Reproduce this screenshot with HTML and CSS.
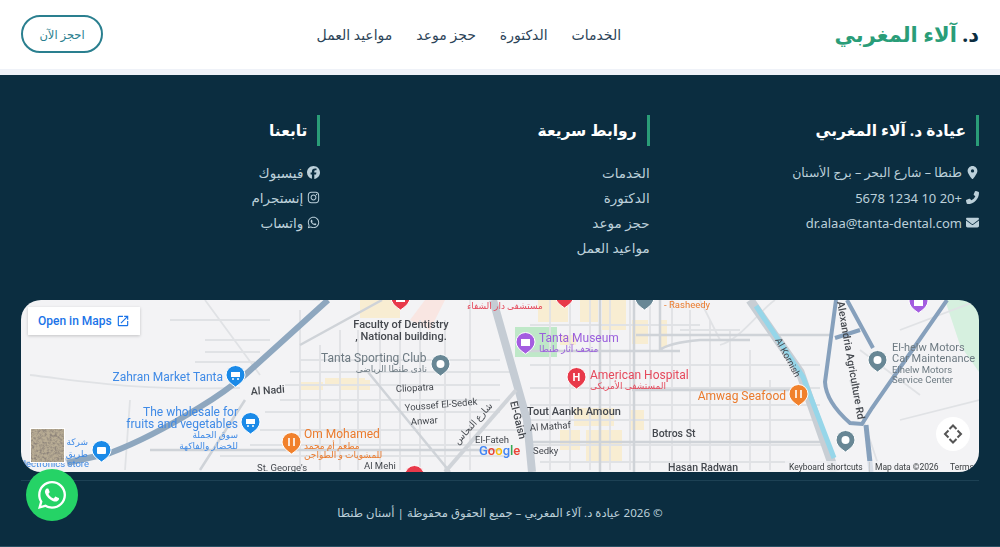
FILE: index.html
```html
<!DOCTYPE html>
<html lang="ar" dir="rtl">
<head>
    <meta charset="utf-8">
    <title>د. آلاء المغربي</title>
    <link rel="stylesheet" href="styles.css">
</head>
<body>
<header class="topbar">
    <a class="logo"><span class="logo-dr">د.</span> آلاء المغربي</a>
    <nav class="nav">
        <a>الخدمات</a>
        <a>الدكتورة</a>
        <a>حجز موعد</a>
        <a>مواعيد العمل</a>
    </nav>
    <a class="book-btn">احجز الآن</a>
</header>

<footer class="footer">
    <div class="cols">
        <div class="col">
            <h3 class="col-title">عيادة د. آلاء المغربي</h3>
            <ul class="list">
                <li class="list-sm"><svg class="ico" viewBox="0 0 384 512"><path d="M215.7 499.2C267 435 384 279.4 384 192C384 86 298 0 192 0S0 86 0 192c0 87.4 117 243 168.3 307.2c12.3 15.3 35.1 15.3 47.4 0zM192 128a64 64 0 1 1 0 128 64 64 0 1 1 0-128z"/></svg>طنطا – شارع البحر – برج الأسنان</li>
                <li class="list-sm"><svg class="ico ico-flip" viewBox="0 0 512 512"><path d="M164.9 24.6c-7.7-18.6-28-28.5-47.4-23.2l-88 24C12.1 30.2 0 46 0 64C0 311.4 200.6 512 448 512c18 0 33.8-12.1 38.6-29.5l24-88c5.3-19.4-4.6-39.7-23.2-47.4l-96-40c-16.3-6.8-35.2-2.1-46.3 11.6L304.7 368C234.3 334.7 177.3 277.7 144 207.3L193.3 167c13.7-11.2 18.4-30 11.6-46.3l-40-96z"/></svg><span class="latin">+20 10 1234 5678</span></li>
                <li class="list-sm"><svg class="ico" viewBox="0 0 512 512"><path d="M48 64C21.5 64 0 85.5 0 112c0 15.1 7.1 29.3 19.2 38.4L236.8 313.6c11.4 8.5 27 8.5 38.4 0L492.8 150.4c12.1-9.1 19.2-23.3 19.2-38.4c0-26.5-21.5-48-48-48H48zM0 176V384c0 35.3 28.7 64 64 64H448c35.3 0 64-28.7 64-64V176L294.4 339.2c-22.8 17.1-54 17.1-76.8 0L0 176z"/></svg><span class="latin" dir="ltr">dr.alaa@tanta-dental.com</span></li>
            </ul>
        </div>
        <div class="col">
            <h3 class="col-title">روابط سريعة</h3>
            <ul class="list">
                <li>الخدمات</li>
                <li>الدكتورة</li>
                <li>حجز موعد</li>
                <li>مواعيد العمل</li>
            </ul>
        </div>
        <div class="col">
            <h3 class="col-title">تابعنا</h3>
            <ul class="list">
                <li><svg class="ico" viewBox="0 0 512 512"><path d="M512 256C512 114.6 397.4 0 256 0S0 114.6 0 256C0 376 82.7 476.8 194.2 504.5V334.2H141.4V256h52.8V222.3c0-87.1 39.4-127.5 125-127.5c16.2 0 44.2 3.2 55.7 6.4V172c-6-.6-16.5-1-29.6-1c-42 0-58.2 15.9-58.2 57.2V256h83.6l-14.4 78.2H287V510.1C413.8 494.8 512 386.9 512 256h0z"/></svg>فيسبوك</li>
                <li><svg class="ico" viewBox="0 0 448 512"><path d="M224.1 141c-63.6 0-114.9 51.3-114.9 114.9s51.3 114.9 114.9 114.9S339 319.5 339 255.9 287.7 141 224.1 141zm0 189.6c-41.1 0-74.7-33.5-74.7-74.7s33.5-74.7 74.7-74.7 74.7 33.5 74.7 74.7-33.6 74.7-74.7 74.7zm146.4-194.3c0 14.9-12 26.8-26.8 26.8-14.9 0-26.8-12-26.8-26.8s12-26.8 26.8-26.8 26.8 12 26.8 26.8zm76.1 27.2c-1.7-35.9-9.9-67.7-36.2-93.9-26.2-26.2-58-34.4-93.9-36.2-37-2.1-147.9-2.1-184.9 0-35.8 1.7-67.6 9.9-93.9 36.1s-34.4 58-36.2 93.9c-2.1 37-2.1 147.9 0 184.9 1.7 35.9 9.9 67.7 36.2 93.9s58 34.4 93.9 36.2c37 2.1 147.9 2.1 184.9 0 35.9-1.7 67.7-9.9 93.9-36.2 26.2-26.2 34.4-58 36.2-93.9 2.1-37 2.1-147.8 0-184.8zM398.8 388c-7.8 19.6-22.9 34.7-42.6 42.6-29.5 11.7-99.5 9-132.1 9s-102.7 2.6-132.1-9c-19.6-7.8-34.7-22.9-42.6-42.6-11.7-29.5-9-99.5-9-132.1s-2.6-102.7 9-132.1c7.8-19.6 22.9-34.7 42.6-42.6 29.5-11.7 99.5-9 132.1-9s102.7-2.6 132.1 9c19.6 7.8 34.7 22.9 42.6 42.6 11.7 29.5 9 99.5 9 132.1s2.7 102.7-9 132.1z"/></svg>إنستجرام</li>
                <li><svg class="ico" viewBox="0 0 448 512"><path d="M380.9 97.1C339 55.1 283.2 32 223.9 32c-122.4 0-222 99.6-222 222 0 39.1 10.2 77.3 29.6 111L0 480l117.7-30.9c32.4 17.7 68.9 27 106.1 27h.1c122.3 0 224.1-99.6 224.1-222 0-59.3-25.2-115-67.1-157zm-157 341.6c-33.2 0-65.7-8.9-94-25.7l-6.7-4-69.8 18.3L72 359.2l-4.4-7c-18.5-29.4-28.2-63.3-28.2-98.2 0-101.7 82.8-184.5 184.6-184.5 49.3 0 95.6 19.2 130.4 54.1 34.8 34.9 56.2 81.2 56.1 130.5 0 101.8-84.9 184.6-186.6 184.6zm101.2-138.2c-5.5-2.8-32.8-16.2-37.9-18-5.1-1.9-8.8-2.8-12.5 2.8-3.7 5.6-14.3 18-17.6 21.8-3.2 3.7-6.5 4.2-12 1.4-32.6-16.3-54-29.1-75.5-66-5.7-9.8 5.7-9.1 16.3-30.3 1.8-3.7.9-6.9-.5-9.7-1.4-2.8-12.5-30.1-17.1-41.2-4.5-10.8-9.1-9.3-12.5-9.5-3.2-.2-6.9-.2-10.6-.2-3.7 0-9.7 1.4-14.8 6.9-5.1 5.6-19.4 19-19.4 46.3 0 27.3 19.9 53.7 22.6 57.4 2.8 3.7 39.1 59.7 94.8 83.8 35.2 15.2 49 16.5 66.6 13.9 10.7-1.6 32.8-13.4 37.4-26.4 4.6-13 4.6-24.1 3.2-26.4-1.3-2.5-5-3.9-10.5-6.6z"/></svg>واتساب</li>
            </ul>
        </div>
    </div>

    <div class="map">
        <svg class="map-art" viewBox="21 300 958 172">
            <defs>
                <filter id="rock" x="0" y="0" width="100%" height="100%"><feTurbulence type="fractalNoise" baseFrequency="0.4" numOctaves="3"/><feColorMatrix values="0 0 0 0 0.28  0 0 0 0 0.24  0 0 0 0 0.2  2 2 0 0 -1.7"/></filter>
            </defs>
            <rect x="21" y="300" width="958" height="172" fill="#f3f3f5"/>
            <polygon points="945,300 979,300 979,372 960,345" fill="#d6f0df"/>
            <rect x="515" y="327" width="42" height="30" fill="#bfe8c8"/>
            <polygon points="425,300 445,300 430,330 410,320" fill="#f9e6e2"/>
            <!-- beige blocks -->
            <g fill="#f8edd2">
                <rect x="580" y="300" width="18" height="22"/><rect x="602" y="300" width="24" height="30"/><rect x="632" y="320" width="16" height="24"/>
                <rect x="560" y="335" width="16" height="10"/><rect x="574" y="408" width="40" height="18"/><rect x="560" y="430" width="20" height="20"/>
                <rect x="586" y="430" width="36" height="32"/><rect x="630" y="410" width="14" height="20"/><rect x="325" y="378" width="40" height="8"/>
                <rect x="301" y="382" width="22" height="8"/><rect x="360" y="300" width="40" height="18"/><rect x="340" y="380" width="30" height="10"/>
                <rect x="660" y="320" width="7" height="28"/><rect x="538" y="300" width="30" height="22"/>
            </g>
            <!-- street grid -->
            <g fill="none" stroke="#e0e2e5" stroke-width="1.8">
                <path d="M300 360H500M290 372H510M285 385H500M280 400H500M265 412H500M260 430H520M250 445H500M220 456H510"/>
                <path d="M530 325H700M530 365H820M530 388H820M530 405H820M530 420H820M530 445H830M540 462H830"/>
                <path d="M300 310V470M320 345V470M340 330V470M358 330V470M380 320V470M400 320V470M420 320V470M445 320V470M470 300V470"/>
                <path d="M550 300V470M570 300V470M590 300V470M610 300V470M630 300V470M650 300V470M672 300V470M690 310V470M710 320V470M730 330V470M750 350V470M770 380V470"/>
                <path d="M205 300L260 375M230 300H320M170 320H270M205 340H270M205 352H260M195 362H255"/>
                <path d="M30 375C90 382 130 390 240 388M130 400L125 470M740 330H680M720 345C740 340 760 310 775 300M700 300L720 340"/>
                <path d="M860 350L920 395M850 380L880 470M900 420L979 400M900 330L979 300"/>
            </g>
            <g fill="none" stroke="#cfd3d8" stroke-width="2.500">
                <path d="M382 300L300 345M368 372L450 472M245 400L200 470M150 450H500M600 300V472M634 300V472M660 300V350Q668 343 700 340L750 340M530 442H830M520 351H680M20 463C60 462 90 456 120 450"/>
                <path d="M636 335H830M632 390H800"/>
            </g>
            <path d="M493 300L510 360L527 420L532 472" fill="none" stroke="#c5ccd4" stroke-width="8"/>
            <path d="M516 390L445 472" fill="none" stroke="#d0d4d9" stroke-width="4"/>
            <path d="M328 300L245 375Q225 392 200 407Q150 438 110 453L67 463" fill="none" stroke="#8ea7bf" stroke-width="6"/>
            <path d="M750 300L800 372L835 472" fill="none" stroke="#c8ced4" stroke-width="9"/>
            <path d="M756 306L803 377L834 458" fill="none" stroke="#96d6e9" stroke-width="5"/>
            <g fill="none" stroke="#86a0bc" stroke-width="4">
                <path d="M836 300L825 382Q826 402 850 423L862 424L872 408L947 300"/>
                <path d="M847 300L873 348M835 338L860 330"/>
                <path d="M866 425L871 472" stroke-width="5"/>
            </g>
            <!-- labels -->
            <g class="m-dark">
                <text x="401" y="328" text-anchor="middle" class="m-bold">Faculty of Dentistry</text>
                <text x="401" y="340" text-anchor="middle" class="m-bold">, National building.</text>
                <text x="251" y="395" class="m-sm" transform="rotate(-4 251 395)">Al Nadi</text>
                <text x="396" y="392" class="m-xs" transform="rotate(-3 396 392)">Cliopatra</text>
                <text x="405" y="411" class="m-xs" transform="rotate(-5 405 411)">Youssef El-Sedek</text>
                <text x="411" y="425" class="m-xs" transform="rotate(-4 411 425)">Anwar</text>
                <text x="527" y="415" class="m-bold">Tout Aankh Amoun</text>
                <text x="530" y="431" class="m-xs" transform="rotate(-4 530 431)">Al Mathaf</text>
                <text x="475" y="443" class="m-xs">El-Fateh</text>
                <text x="533" y="454" class="m-xs">Sedky</text>
                <text x="0" y="0" class="m-sm" transform="translate(510 402) rotate(76)">El-Gaish</text>
                <text x="0" y="0" class="m-xs" transform="translate(458 445) rotate(-48)">شارع النحاس</text>
                <text x="364" y="469" class="m-xs">Al Mehi</text>
                <text x="652" y="437" class="m-sm">Botros St</text>
                <text x="668" y="471" class="m-sm">Hasan Radwan</text>
                <text x="257" y="471" class="m-xs">St. George's</text>
                <text x="0" y="0" class="m-xs" transform="translate(775 340) rotate(62)">Al Kornish</text>
                <text x="0" y="0" class="m-sm" transform="translate(837 302) rotate(80)">Alexandria Agriculture Rd</text>
            </g>
            <g class="m-gray">
                <text x="321" y="362" class="m-lg">Tanta Sporting Club</text>
                <text x="427" y="372" class="m-ar" text-anchor="end">نادى طنطا الرياضى</text>
                <text x="892" y="351" class="m-md">El-helw Motors</text>
                <text x="892" y="362" class="m-md">Car Maintenance</text>
                <text x="892" y="373" class="m-xs">Elhelw Motors</text>
                <text x="892" y="383" class="m-xs">Service Center</text>
            </g>
            <g class="m-blue">
                <text x="223" y="381" text-anchor="end" class="m-lg">Zahran Market Tanta</text>
                <text x="238" y="416" text-anchor="end" class="m-lg">The wholesale for</text>
                <text x="238" y="428" text-anchor="end" class="m-lg">fruits and vegetables</text>
                <text x="238" y="438" text-anchor="end" class="m-ar">سوق الجملة</text>
                <text x="238" y="449" text-anchor="end" class="m-ar">للخضار والفاكهة</text>
                <text x="88" y="445" text-anchor="end" class="m-ar">شركة</text>
                <text x="88" y="457" text-anchor="end" class="m-ar">طريق</text>
                <text x="89" y="467" text-anchor="end" class="m-xs">Electronics store</text>
            </g>
            <g class="m-orange">
                <text x="304" y="438" class="m-lg">Om Mohamed</text>
                <text x="304" y="449" class="m-ar">مطعم أم محمد</text>
                <text x="304" y="458" class="m-ar">للمشويات و الطواجن</text>
                <text x="786" y="400" text-anchor="end" class="m-lg">Amwag Seafood</text>
            </g>
            <g class="m-red">
                <text x="590" y="379" class="m-lg">American Hospital</text>
                <text x="590" y="389" class="m-ar">المستشفى الأمريكى</text>
                <text x="467" y="309" class="m-ar">مستشفى دار الشفاء</text>
            </g>
            <text x="664" y="308" class="m-xs m-orange">- Rasheedy</text>
            <g class="m-purple">
                <text x="539" y="342" class="m-lg">Tanta Museum</text>
                <text x="539" y="352" class="m-ar">متحف آثار طنطا</text>
            </g>
            <!-- pins -->
            <g>
                <g fill="#1a8ae8" stroke="#fff"><path d="M226 375a9.500 9.500 0 1 1 19 0q0 6-9.500 12q-9.500-6-9.500-12z"/><path d="M241 422a9.500 9.500 0 1 1 19 0q0 6-9.500 12q-9.500-6-9.500-12z"/><path d="M92 450a9.500 9.500 0 1 1 19 0q0 6-9.500 12q-9.500-6-9.500-12z"/></g>
                <g fill="#fff"><rect x="231" y="372" width="9" height="5"/><rect x="246" y="419" width="9" height="5"/><rect x="97" y="447" width="9" height="7" rx="1"/><circle cx="233" cy="379" r="1"/><circle cx="238" cy="379" r="1"/><circle cx="248" cy="426" r="1"/><circle cx="253" cy="426" r="1"/></g>
                <g fill="#f1812c" stroke="#fff"><path d="M282 442a9.500 9.500 0 1 1 19 0q0 6-9.500 12q-9.500-6-9.500-12z"/><path d="M789 394a9.500 9.500 0 1 1 19 0q0 6-9.500 12q-9.500-6-9.500-12z"/></g>
                <g stroke="#fff" stroke-width="1.600" fill="none"><path d="M289 438v8M294 438v8M796 390v8M801 390v8"/></g>
                <g fill="#e8394a" stroke="#fff"><path d="M567 377a9.500 9.500 0 1 1 19 0q0 6-9.500 12q-9.500-6-9.500-12z"/><path d="M391 298a9.500 9.500 0 1 1 19 0q0 6-9.500 12q-9.500-6-9.500-12z"/><path d="M555 296a9.500 9.500 0 1 1 19 0q0 6-9.500 12q-9.500-6-9.500-12z"/><path d="M405 475a9.500 9.500 0 1 1 19 0q0 6-9.500 12q-9.500-6-9.500-12z"/></g>
                <text x="576.5" y="381" text-anchor="middle" class="m-pin">H</text>
                <g fill="#fff"><rect x="396" y="296" width="9" height="6"/><rect x="560" y="294" width="9" height="6"/></g>
                <g fill="#a45de0" stroke="#fff"><path d="M516 342a9.500 9.500 0 1 1 19 0q0 6-9.500 12q-9.500-6-9.500-12z"/><path d="M909 301a9.500 9.500 0 1 1 19 0q0 6-9.500 12q-9.500-6-9.500-12z"/></g>
                <g fill="#fff"><rect x="521" y="339" width="9" height="7"/><rect x="914" y="299" width="9" height="7"/></g>
                <g fill="#688795" stroke="#fff"><path d="M431 364a9.500 9.500 0 1 1 19 0q0 6-9.500 12q-9.500-6-9.500-12z"/><path d="M868 360a9.500 9.500 0 1 1 19 0q0 6-9.500 12q-9.500-6-9.500-12z"/><path d="M836 440a9.500 9.500 0 1 1 19 0q0 6-9.500 12q-9.500-6-9.500-12z"/><path d="M635 298a9.500 9.500 0 1 1 19 0q0 6-9.500 12q-9.500-6-9.500-12z"/></g>
                <g fill="#fff"><circle cx="440.500" cy="364" r="4"/><circle cx="877.500" cy="360" r="4"/><circle cx="845.500" cy="440" r="4"/></g>
            </g>
            <text x="479" y="455" class="m-goog"><tspan fill="#4285f4">G</tspan><tspan fill="#ea4335">o</tspan><tspan fill="#fbbc05">o</tspan><tspan fill="#4285f4">g</tspan><tspan fill="#34a853">l</tspan><tspan fill="#ea4335">e</tspan></text>
            <rect x="30" y="428" width="35" height="35" fill="#fff"/>
            <rect x="31" y="429" width="33" height="33" fill="#b8ac94"/>
            <rect x="31" y="429" width="33" height="33" filter="url(#rock)"/>
            <rect x="785" y="461" width="194" height="11" fill="#f3f3f5" opacity="0.75"/>
            <text x="789" y="470" class="m-attr">Keyboard shortcuts</text>
            <rect x="869" y="462" width="1" height="10" fill="#c9cbce"/>
            <text x="875" y="470" class="m-attr">Map data ©2026</text>
            <text x="950" y="470" class="m-attr">Terms</text>
            <circle cx="953" cy="434" r="17" fill="#fff"/>
            <path d="M949.500 429l3.500-3.500 3.500 3.500M949.500 439l3.500 3.500 3.500-3.500M948.500 430.500l-3.500 3.500 3.500 3.500M957.500 430.500l3.500 3.500-3.500 3.500" fill="none" stroke="#555" stroke-width="2"/>
        </svg>
        <a class="open-maps" dir="ltr">Open in Maps
            <svg class="open-ico" viewBox="0 0 24 24"><path d="M19 19H5V5h7V3H5a2 2 0 0 0-2 2v14a2 2 0 0 0 2 2h14a2 2 0 0 0 2-2v-7h-2v7zM14 3v2h3.590l-9.830 9.830 1.410 1.410L19 6.410V10h2V3h-7z"/></svg>
        </a>
    </div>

    <div class="copy">© 2026 عيادة د. آلاء المغربي – جميع الحقوق محفوظة | أسنان طنطا</div>
</footer>

<a class="wa-float"><svg viewBox="0 0 448 512"><path d="M380.9 97.1C339 55.1 283.2 32 223.9 32c-122.4 0-222 99.6-222 222 0 39.1 10.2 77.3 29.6 111L0 480l117.7-30.9c32.4 17.7 68.9 27 106.1 27h.1c122.3 0 224.1-99.6 224.1-222 0-59.3-25.2-115-67.1-157zm-157 341.6c-33.2 0-65.7-8.9-94-25.7l-6.7-4-69.8 18.3L72 359.2l-4.4-7c-18.5-29.4-28.2-63.3-28.2-98.2 0-101.7 82.8-184.5 184.6-184.5 49.3 0 95.6 19.2 130.4 54.1 34.8 34.9 56.2 81.2 56.1 130.5 0 101.8-84.9 184.6-186.6 184.6zm101.2-138.2c-5.5-2.8-32.8-16.2-37.9-18-5.1-1.9-8.8-2.8-12.5 2.8-3.7 5.6-14.3 18-17.6 21.8-3.2 3.7-6.5 4.2-12 1.4-32.6-16.3-54-29.1-75.5-66-5.7-9.8 5.7-9.1 16.3-30.3 1.8-3.7.9-6.9-.5-9.7-1.4-2.8-12.5-30.1-17.1-41.2-4.5-10.8-9.1-9.3-12.5-9.5-3.2-.2-6.9-.2-10.6-.2-3.7 0-9.7 1.4-14.8 6.9-5.1 5.6-19.4 19-19.4 46.3 0 27.3 19.9 53.7 22.6 57.4 2.8 3.7 39.1 59.7 94.8 83.8 35.2 15.2 49 16.5 66.6 13.9 10.7-1.6 32.8-13.4 37.4-26.4 4.6-13 4.6-24.1 3.2-26.4-1.3-2.5-5-3.9-10.5-6.6z"/></svg></a>
</body>
</html>
```
FILE: styles.css
```css
* {
    box-sizing: border-box;
}
body {
    margin: 0;
    background: #eff2f8;
    font-family: "Noto Sans", "DejaVu Sans", sans-serif;
    overflow: hidden;
}

/* top bar */
.topbar {
    height: 69px;
    background: #fff;
    padding: 0 21px 1px;
    display: flex;
    align-items: center;
    justify-content: space-between;
}
.logo {
    font-size: 21px;
    font-weight: 700;
    color: #2a9d78;
}
.logo-dr {
    color: #0b2d40;
}
.nav {
    display: flex;
    gap: 24px;
    font-size: 14px;
    color: #2c4458;
}
.book-btn {
    width: 82px;
    height: 38px;
    border: 2px solid #2a7f8f;
    border-radius: 19px;
    display: flex;
    align-items: center;
    justify-content: center;
    font-size: 11.5px;
    color: #2a7f8f;
}

/* footer */
.footer {
    margin-top: 6px;
    background: #0b2d40;
    border-bottom: 1px solid #2a5063;
    padding: 40px 21px 0;
    height: 472px;
}
.cols {
    display: grid;
    grid-template-columns: repeat(3, 1fr);
    gap: 30px;
    height: 185px;
}
.col-title {
    margin: 0 0 14px;
    height: 31px;
    line-height: 31px;
    padding-right: 10px;
    border-right: 3px solid #2a9d78;
    font-size: 15.5px;
    font-weight: 700;
    color: #fff;
}
.list {
    margin: 0;
    padding: 0;
    list-style: none;
    color: #bcd0da;
    font-size: 13.5px;
}
.list li {
    height: 25px;
    display: flex;
    align-items: center;
    gap: 4px;
}
.list .list-sm {
    font-size: 12.5px;
}
.latin {
    font-size: 13px;
}
.ico {
    width: 13px;
    height: 13px;
    fill: #bcd0da;
    flex: none;
}
.ico-flip {
    transform: scaleX(-1);
}

/* map */
.map {
    position: relative;
    height: 172px;
    border-radius: 20px;
    overflow: hidden;
}
.map-art {
    display: block;
    width: 100%;
    height: 100%;
    direction: ltr;
    filter: blur(0.4px);
}
.map-art text {
    font-family: Roboto, "DejaVu Sans", sans-serif;
}
.m-dark { fill: #44484e; }
.m-gray { fill: #6d7a82; }
.m-blue { fill: #3f8ae6; }
.m-orange { fill: #ea7a2c; }
.m-red { fill: #e5495c; }
.m-purple { fill: #9a5fdc; }
.m-bold { font-size: 11px; font-weight: 500; }
.m-lg { font-size: 12px; }
.m-md { font-size: 11px; }
.m-sm { font-size: 10.5px; font-weight: 500; }
.m-xs { font-size: 9.5px; }
.m-ar { font-size: 9px; }
.m-pin { font-size: 11px; font-weight: 700; fill: #fff; }
.m-goog { font-size: 13px; font-weight: 500; }
.m-attr { font-size: 8.5px; fill: #3c4043; }
.open-maps {
    position: absolute;
    top: 7px;
    left: 7px;
    height: 28px;
    width: 112px;
    background: #fff;
    box-shadow: 0 1px 3px rgba(0, 0, 0, 0.2);
    display: flex;
    align-items: center;
    justify-content: space-between;
    padding: 0 10px;
    font-family: Roboto, sans-serif;
    font-size: 12px;
    font-weight: 500;
    color: #1a73e8;
}
.open-ico {
    width: 14px;
    height: 14px;
    fill: #1a73e8;
}

/* bottom line */
.copy {
    margin-top: 8px;
    border-top: 1px solid #1d4154;
    padding-top: 24px;
    text-align: center;
    font-size: 11.6px;
    color: #bcd0da;
}
.wa-float {
    position: fixed;
    left: 26px;
    bottom: 26px;
    width: 52px;
    height: 52px;
    border-radius: 50%;
    background: #25d366;
    display: flex;
    align-items: center;
    justify-content: center;
}
.wa-float svg {
    width: 28px;
    height: 32px;
    fill: #fff;
}
```
